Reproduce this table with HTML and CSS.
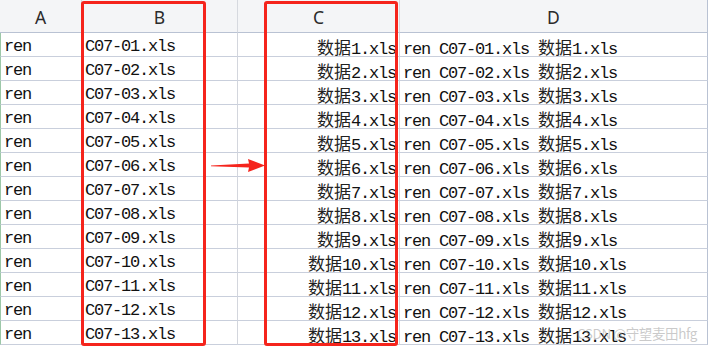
FILE: index.html
```html
<!DOCTYPE html>
<html lang="zh">
<head>
<meta charset="utf-8">
<link rel="stylesheet" href="styles.css">
</head>
<body>
<div class="sheet">
  <div class="grid">
    <div class="hd">A</div><div class="hd">B</div><div class="hd">C</div><div class="hd hd-last">D</div>

    <div class="c a">ren</div><div class="c b">C07-01.xls</div><div class="c r"><span class="cj">数据</span>1.xls</div><div class="c d">ren C07-01.xls <span class="cj">数据</span>1.xls</div>
    <div class="c a">ren</div><div class="c b">C07-02.xls</div><div class="c r"><span class="cj">数据</span>2.xls</div><div class="c d">ren C07-02.xls <span class="cj">数据</span>2.xls</div>
    <div class="c a">ren</div><div class="c b">C07-03.xls</div><div class="c r"><span class="cj">数据</span>3.xls</div><div class="c d">ren C07-03.xls <span class="cj">数据</span>3.xls</div>
    <div class="c a">ren</div><div class="c b">C07-04.xls</div><div class="c r"><span class="cj">数据</span>4.xls</div><div class="c d">ren C07-04.xls <span class="cj">数据</span>4.xls</div>
    <div class="c a">ren</div><div class="c b">C07-05.xls</div><div class="c r"><span class="cj">数据</span>5.xls</div><div class="c d">ren C07-05.xls <span class="cj">数据</span>5.xls</div>
    <div class="c a">ren</div><div class="c b">C07-06.xls</div><div class="c r"><span class="cj">数据</span>6.xls</div><div class="c d">ren C07-06.xls <span class="cj">数据</span>6.xls</div>
    <div class="c a">ren</div><div class="c b">C07-07.xls</div><div class="c r"><span class="cj">数据</span>7.xls</div><div class="c d">ren C07-07.xls <span class="cj">数据</span>7.xls</div>
    <div class="c a">ren</div><div class="c b">C07-08.xls</div><div class="c r"><span class="cj">数据</span>8.xls</div><div class="c d">ren C07-08.xls <span class="cj">数据</span>8.xls</div>
    <div class="c a">ren</div><div class="c b">C07-09.xls</div><div class="c r"><span class="cj">数据</span>9.xls</div><div class="c d">ren C07-09.xls <span class="cj">数据</span>9.xls</div>
    <div class="c a">ren</div><div class="c b">C07-10.xls</div><div class="c r"><span class="cj">数据</span>10.xls</div><div class="c d">ren C07-10.xls <span class="cj">数据</span>10.xls</div>
    <div class="c a">ren</div><div class="c b">C07-11.xls</div><div class="c r"><span class="cj">数据</span>11.xls</div><div class="c d">ren C07-11.xls <span class="cj">数据</span>11.xls</div>
    <div class="c a">ren</div><div class="c b">C07-12.xls</div><div class="c r"><span class="cj">数据</span>12.xls</div><div class="c d">ren C07-12.xls <span class="cj">数据</span>12.xls</div>
    <div class="c a">ren</div><div class="c b">C07-13.xls</div><div class="c r"><span class="cj">数据</span>13.xls</div><div class="c d">ren C07-13.xls <span class="cj">数据</span>13.xls</div>
  </div>

  <div class="mark mark-b"></div>
  <div class="mark mark-c"></div>
  <svg class="arrow" width="56" height="16" viewBox="0 0 56 16">
    <path d="M0 7.4 L38 5.6 L37 1 L54 7.5 L37 14 L38 9.6 L0 8.2 Z" fill="#f5241c"/>
  </svg>
  <div class="watermark">CSDN @守望麦田hfg</div>
</div>
</body>
</html>
```

FILE: styles.css
```css
html, body {
  margin: 0;
  padding: 0;
  background: #ffffff;
}

.sheet {
  position: relative;
  width: 708px;
  height: 347px;
  overflow: hidden;
}

.grid {
  display: grid;
  grid-template-columns: 82px 156px 162px 308px;
  grid-template-rows: 33px repeat(13, 24px);
}

.hd {
  background: #f4f5f7;
  border-right: 1px solid #d6d9df;
  border-bottom: 1px solid #b9c2d3;
  font-family: "Noto Sans", "Liberation Sans", sans-serif;
  font-size: 17.5px;
  color: #2b2b2b;
  display: flex;
  align-items: center;
  justify-content: center;
  padding-top: 2px;
  box-sizing: border-box;
}

.hd-last {
  border-right-color: #b9c2d3;
}

.c {
  border-right: 1px solid #d3d6dd;
  border-bottom: 1px solid #c9cfdc;
  font-family: "Liberation Mono", "Noto Sans CJK SC", monospace;
  font-size: 17px;
  letter-spacing: -1.2px;
  color: #111111;
  line-height: 19px;
  white-space: nowrap;
  box-sizing: border-box;
  padding-top: 4px;
}

.cj {
  font-family: "Noto Sans CJK SC", sans-serif;
  font-size: 17px;
  line-height: 19px;
  letter-spacing: 0;
  color: #222222;
}

.a {
  padding-left: 3px;
  border-left: 1px solid #9cc7a8;
}

.b {
  padding-left: 3px;
}

.r {
  text-align: right;
  padding-right: 3px;
}

.d {
  padding-left: 3px;
  border-right-color: #b9c2d3;
}

.mark {
  position: absolute;
  top: 1px;
  height: 345px;
  border: 3px solid #f5241c;
  border-radius: 3px;
  box-sizing: border-box;
}

.mark-b {
  left: 81px;
  width: 125px;
}

.mark-c {
  left: 264px;
  width: 134px;
}

.arrow {
  position: absolute;
  left: 211px;
  top: 158px;
}

.watermark {
  position: absolute;
  left: 577px;
  top: 323px;
  font-family: "Noto Sans CJK SC", sans-serif;
  font-size: 13.5px;
  color: rgba(150, 150, 150, 0.5);
  letter-spacing: -0.4px;
}
```
